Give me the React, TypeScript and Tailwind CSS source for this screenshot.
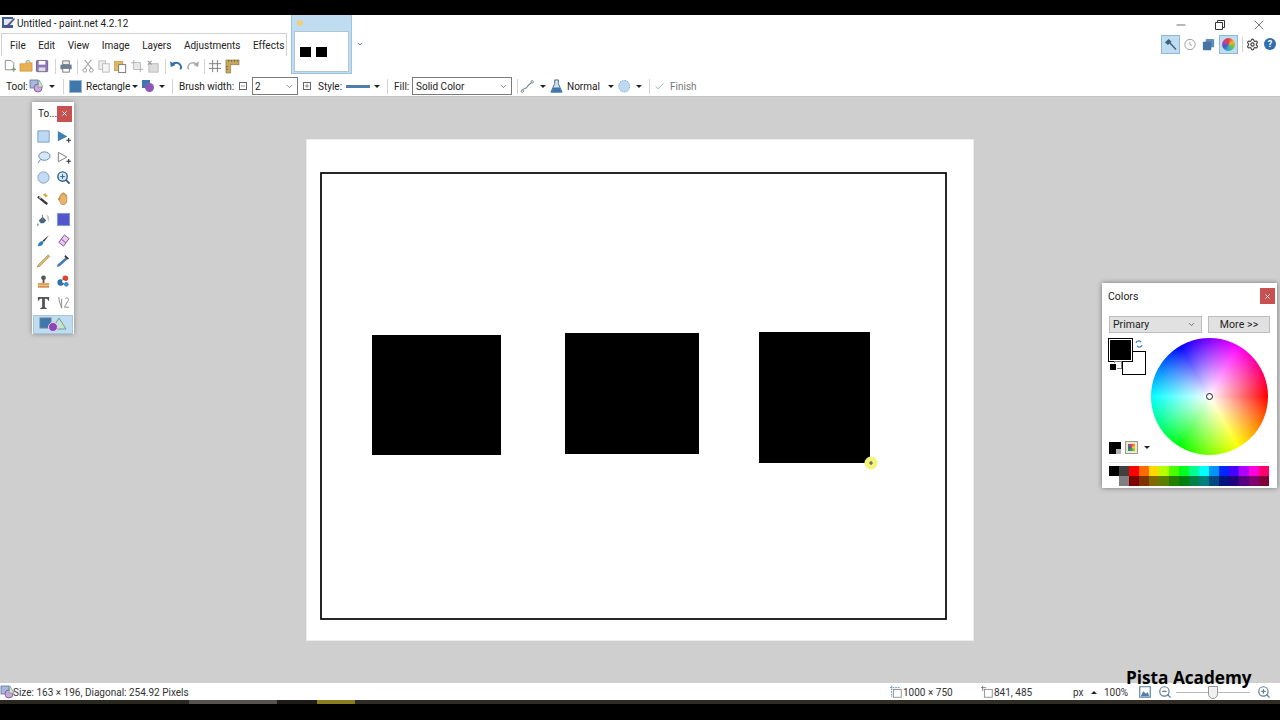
import type { ReactNode } from 'react'
import { Check, ChevronDown, Settings, X, Minus, Plus, ZoomIn, ZoomOut } from 'lucide-react'

const paletteTop = ['#000000', '#404040', '#ff0000', '#ff6a00', '#ffd800', '#b6ff00', '#4cff00', '#00ff21', '#00ff90', '#00ffff', '#0094ff', '#0026ff', '#4800ff', '#b200ff', '#ff00dc', '#ff006e']
const paletteBottom = ['#ffffff', '#808080', '#7f0000', '#7f3300', '#7f6a00', '#5b7f00', '#267f00', '#007f0e', '#007f46', '#007f7f', '#004a7f', '#00137f', '#21007f', '#57007f', '#7f006e', '#7f0037']
const menus = ['File', 'Edit', 'View', 'Image', 'Layers', 'Adjustments', 'Effects']

function Ico({ size = 16, children }: { size?: number; children: ReactNode }) {
  return (
    <svg width={size} height={size} viewBox="0 0 16 16" fill="none" className="shrink-0">
      {children}
    </svg>
  )
}

function Caret({ className = '' }: { className?: string }) {
  return <span className={`block w-0 h-0 border-x-[3px] border-x-transparent border-t-[3px] border-t-[#222] ${className}`} />
}

function Sep({ className = '' }: { className?: string }) {
  return <span className={`block w-px h-[15px] bg-[#d4d4d4] shrink-0 ${className}`} />
}

function ShapesIcon() {
  return (
    <Ico size={16}>
      <rect x="1" y="2" width="8" height="8" fill="#a9b9d9" stroke="#5a6fa8" strokeWidth=".8" />
      <circle cx="9" cy="10" r="4" fill="#c9a6dc" stroke="#7a4fa0" strokeWidth=".8" />
      <path d="M10 2l4 7h-5z" fill="#cfe6d8" stroke="#6b9c86" strokeWidth=".7" />
    </Ico>
  )
}

const toolIcons: ReactNode[] = [
  <rect key="a" x="2" y="2" width="12" height="12" fill="#bcd9f4" stroke="#7f9db9" />,
  <g key="b"><path d="M2 2l10 6-10 5z" fill="#3f7fb5" /><path d="M11 12h5M13.5 9.5v5" stroke="#333" strokeWidth="1.2" /></g>,
  <g key="c"><ellipse cx="9" cy="6.5" rx="6" ry="4.5" fill="#d5e6f5" stroke="#5f87ad" /><path d="M5 10l-3 4" stroke="#5f87ad" /></g>,
  <g key="d"><path d="M2.500 2.500l9 5-9 5z" fill="#fff" stroke="#777" /><path d="M11 12h5M13.500 9.500v5" stroke="#333" strokeWidth="1.200" /></g>,
  <circle key="e" cx="8" cy="8" r="6" fill="#c3dcf3" stroke="#7f9db9" />,
  <g key="f"><circle cx="7" cy="7" r="5" fill="#d8e8f5" stroke="#2f5f86" strokeWidth="1.500" /><path d="M7 4.500v5M4.500 7h5" stroke="#2f5f86" /><path d="M10.500 10.500l4 4" stroke="#2f5f86" strokeWidth="2" /></g>,
  <g key="g"><path d="M2 6l10 8" stroke="#333" strokeWidth="2.500" /><path d="M5 8l-1-2" stroke="#ccc" strokeWidth="2" /><path d="M10 2l1 2 2 1-2 1-1 1-1-2-2-1 2-1z" fill="#d8a63a" /></g>,
  <path key="h" d="M4 9V5.500c0-1 1.500-1 1.500 0V3.500c0-1 1.500-1 1.500 0v-1c0-1 1.500-1 1.500 0v1c0-1 1.500-1 1.500 0V5c0-1 1.500-1 1.500 0v5c0 3-1.500 4.500-4 4.500S5 13 4 11L2.500 8.500C2 7.500 3.500 7 4 8z" fill="#e8b56a" stroke="#a9782f" strokeWidth=".7" />,
  <g key="i"><path d="M3 9l4-4 4 4-3 3H5z" fill="#44647f" /><path d="M7 3v6" stroke="#777" /><path d="M2 12c-1 1-1 3 0 3s1-2 0-3z" fill="#3f7fb5" /><path d="M11 2l3 3v5h-1z" fill="#ccc" /></g>,
  <g key="j"><rect x="1.500" y="1.500" width="13" height="13" fill="#5555d0" stroke="#7f9db9" /></g>,
  <g key="k"><path d="M14 2L7 8l1.500 1.500z" fill="#444" /><path d="M2 14c0-3 2-5 5-5.500L8 10c-.5 3-3 4-6 4z" fill="#2f7fbe" /></g>,
  <g key="l"><path d="M9 2l5 4-6 8-5-4z" fill="#e7c9ec" stroke="#8a4f9c" /><path d="M5.500 6.500l5 4" stroke="#8a4f9c" /></g>,
  <g key="m"><path d="M13 2l1.500 1.500L4 14l-2.500 1 1-2.500z" fill="#e3c36b" stroke="#8a7a3a" strokeWidth=".7" /><path d="M11.500 3.500l1.500 1.500" stroke="#d77" /></g>,
  <g key="n"><path d="M10 5l2 2-8 7-3 1 1-3z" fill="#3f7fb5" /><path d="M10 2l4 4-2 1-3-3z" fill="#333" /></g>,
  <g key="o"><circle cx="8" cy="4" r="2.500" fill="#555" /><rect x="7" y="5" width="2" height="5" fill="#555" /><rect x="2" y="9.500" width="12" height="3" fill="#e3a35a" /><rect x="2" y="13" width="12" height="1.500" fill="#c9772f" /></g>,
  <g key="p"><circle cx="10" cy="4.500" r="3" fill="#d6462f" /><circle cx="5" cy="9" r="3.500" fill="#2f6fae" /><circle cx="11" cy="11" r="2.500" fill="#3f8fce" /><circle cx="8" cy="8" r="1.500" fill="#fff" /></g>,
  <path key="q" d="M2 2h12v4h-1C12.500 4.500 12 4 9.500 4V13l2 1v1h-7v-1l2-1V4C4 4 3.500 4.500 3 6H2z" fill="#555" />,
  <g key="r" stroke="#8a8a8a" fill="none"><path d="M3 2c0 5 2 8 3 12V4" /><path d="M10 4c1-2 4-1 3 2l-4 7h5" /></g>,
]

function ToolsWindow() {
  return (
    <div className="absolute left-[32px] top-[102px] w-[42px] h-[232px] bg-white shadow-[0_0_5px_rgba(0,0,0,0.35)] flex flex-col">
      <div className="h-[20px] mt-[2px] flex items-center pl-[6px] gap-[3px] text-[10px]">
        <span className="w-[16px]">To...</span>
        <span className="w-[15px] h-[16px] bg-[#c75050] flex items-center justify-center">
          <X size={7} color="#fff" strokeWidth={3} />
        </span>
      </div>
      <div className="grid grid-cols-2 justify-items-center items-center pl-px pr-px pt-[3px] auto-rows-[20.75px]">
        {toolIcons.map((icon, i) => (
          <Ico key={i} size={15}>{icon}</Ico>
        ))}
      </div>
      <div className="mx-px mt-[2px] h-[20px] bg-[#bfdcf0] border border-[#a4c6de] flex items-center justify-center">
        <svg width="32" height="16" viewBox="0 0 32 16" fill="none">
          <rect x="3" y="2" width="11" height="10" fill="#3f78ad" stroke="#6c7f93" />
          <path d="M22 2l7 11H15z" fill="#c6e2d3" stroke="#6e9d8a" />
          <circle cx="16" cy="11" r="4.500" fill="#8e46b6" stroke="#e6d6f0" />
        </svg>
      </div>
    </div>
  )
}

function ColorsWindow() {
  return (
    <div className="absolute left-[1102px] top-[283px] w-[175px] h-[205px] bg-white shadow-[0_0_5px_rgba(0,0,0,0.45)] flex flex-col pl-[7px] pr-[2px]">
      <div className="flex items-center justify-between h-[16px] mt-[5px] text-[10.5px] text-[#222]">
        <span className="-ml-px pt-px">Colors</span>
        <span className="w-[15px] h-[16px] bg-[#c75050] flex items-center justify-center">
          <X size={7} color="#fff" strokeWidth={3} />
        </span>
      </div>
      <div className="flex mt-[12px] gap-[6px]">
        <div className="w-[93px] h-[17px] bg-[#e1e1e1] border border-[#bdbdbd] flex items-center justify-between pl-[3px] pr-[5px] text-[10.5px]">
          Primary
          <ChevronDown size={9} color="#555" />
        </div>
        <div className="w-[62px] h-[17px] bg-[#e1e1e1] border border-[#bdbdbd] flex items-center justify-center text-[10.5px] tracking-[0.1px]">More &gt;&gt;</div>
      </div>
      <div className="flex mt-[5px]">
        <div className="w-[42px] h-[116px] flex flex-col justify-between shrink-0">
          <div className="relative w-[37px] h-[37px] mt-[1px]">
            <span className="absolute left-[13px] top-[12px] w-[24px] h-[24px] bg-white border border-black" />
            <span className="absolute left-0 top-0 w-[23px] h-[22px] bg-black border border-white outline outline-1 outline-black" />
            <span className="absolute left-[5px] top-[22px] w-[8px] h-[8px] bg-white border border-[#777]" />
            <span className="absolute left-0 top-[24px] w-[8px] h-[8px] bg-black border border-white" />
            <svg className="absolute left-[25px] top-0" width="10" height="10" viewBox="0 0 10 10" fill="none">
              <path d="M2 4c.5-2 3-3 5-1M8 6c-.5 2-3 3-5 1" stroke="#3f7fb5" strokeWidth="1.200" />
            </svg>
          </div>
          <div className="flex items-center gap-[4px]">
            <span className="relative w-[12px] h-[12px] bg-black block">
              <span className="absolute right-0 bottom-0 w-[5px] h-[5px] bg-white/70" />
            </span>
            <span className="w-[13px] h-[13px] border border-[#999] bg-[#f2e7c9] p-[2px] block">
              <span className="block w-full h-full bg-[conic-gradient(#d44,#fc3,#3a3,#36c,#d44)]" />
            </span>
            <Caret className="ml-[2px]" />
          </div>
        </div>
        <div className="relative w-[117px] h-[117px] rounded-full bg-[conic-gradient(#8000ff,#ff00ff_30deg,#ff0000_90deg,#ffff00_150deg,#00ff00_210deg,#00ffff_270deg,#0000ff_330deg,#8000ff)]">
          <div className="absolute inset-0 rounded-full bg-[radial-gradient(circle,#ffffff_0%,rgba(255,255,255,0)_70%)]" />
          <span className="absolute left-[55px] top-[55px] w-[7px] h-[7px] rounded-full border border-[#222]" />
        </div>
      </div>
      <div className="h-px bg-[#e4e4e4] mt-[7px] mr-[6px]" />
      <div className="mt-[3px]">
        {[paletteTop, paletteBottom].map((row, r) => (
          <div key={r} className="flex h-[10px]">
            {row.map((c, i) => (
              <span key={i} className="block w-[10px] h-[10px]" style={{ backgroundColor: c }} />
            ))}
          </div>
        ))}
      </div>
    </div>
  )
}

function Toolbar() {
  return (
    <div className="h-[19px] pt-px flex items-center pl-[2px] text-[#999]">
      <Ico size={15}><path d="M3.500 1.500h6l3 3v7h-9z" fill="#fff" stroke="#8a8a8a" /><path d="M10 11h5M12.500 8.500v5" stroke="#6da16a" strokeWidth="1.300" /></Ico>
      <span className="ml-[2px]"><Ico size={15}><path d="M1 5h5l1-1h7v9H1z" fill="#e9b052" stroke="#b98a34" strokeWidth=".6" /><path d="M7 3c2-2 4-1 5 0" stroke="#4d9a4d" /></Ico></span>
      <span className="ml-[1px]"><Ico size={15}><rect x="1.500" y="1.500" width="12" height="12" rx="1" fill="#8c79b8" stroke="#6c5c96" /><rect x="4" y="2" width="7" height="4" fill="#fff" /><rect x="4" y="9" width="7" height="4" fill="#ddd" /></Ico></span>
      <Sep className="ml-[5px] h-[13px]" />
      <span className="ml-[3px]"><Ico size={15}><rect x="4" y="2" width="7" height="4" fill="#eee" stroke="#777" /><rect x="1.500" y="6" width="12" height="5" fill="#6a7f95" /><rect x="4" y="10" width="7" height="4" fill="#fff" stroke="#777" /></Ico></span>
      <Sep className="ml-[3px] h-[13px]" />
      <span className="ml-[3px]"><Ico size={15}><path d="M4 1l7 9M11 1L4 10" stroke="#aaa" strokeWidth="1.200" /><circle cx="4" cy="12" r="2" stroke="#999" /><circle cx="11" cy="12" r="2" stroke="#999" /></Ico></span>
      <span className="ml-[1px]"><Ico size={15}><rect x="2" y="2" width="7" height="9" fill="#eee" stroke="#bbb" /><rect x="6" y="5" width="7" height="9" fill="#f5f5f5" stroke="#bbb" /></Ico></span>
      <span className="ml-[1px]"><Ico size={15}><rect x="1.500" y="2.500" width="9" height="10" fill="#e2b466" stroke="#b98a34" strokeWidth=".6" /><rect x="6" y="6" width="7.500" height="8.500" fill="#fff" stroke="#777" /></Ico></span>
      <span className="ml-[2px]"><Ico size={15}><path d="M1 4h10v10M4 1v10h10" stroke="#aaa" /><rect x="5" y="5" width="5" height="5" fill="#e5e5e5" /></Ico></span>
      <span className="ml-[1px]"><Ico size={15}><rect x="3" y="5" width="10" height="9" fill="#ddd" stroke="#bbb" /><path d="M2 2l4 4M6 2L2 6" stroke="#999" strokeWidth="1.200" /></Ico></span>
      <Sep className="ml-[4px] h-[13px]" />
      <span className="ml-[3px]"><Ico size={15}><path d="M3 6c3-3 9-3 10 3l-1 2" stroke="#2f6da8" strokeWidth="2" /><path d="M1 2.500l1 6 5-2z" fill="#2f6da8" /></Ico></span>
      <span className="ml-[1px]"><Ico size={15}><path d="M13 6C10 3 4 3 3 9l1 2" stroke="#aaa" strokeWidth="1.500" /><path d="M15 2.500l-1 6-5-2z" fill="#aaa" /></Ico></span>
      <Sep className="ml-[4px] h-[13px]" />
      <span className="ml-[3px]"><Ico size={15}><path d="M1 5h13M1 10h13M5 1v13M10 1v13" stroke="#777" /></Ico></span>
      <span className="ml-[2px]"><Ico size={15}><path d="M1 1h14v5H6v9H1z" fill="#c4a862" stroke="#7f6a35" strokeWidth=".6" /><path d="M4 1v2M7 1v2M10 1v2M13 1v2M1 8h2M1 11h2" stroke="#5a4a20" strokeWidth=".7" /></Ico></span>
    </div>
  )
}

function ToolOptions() {
  return (
    <div className="h-[21px] pt-px flex items-center text-[10px] text-[#222] bg-white whitespace-nowrap">
      <span className="ml-[6px] w-[23px]">Tool:</span>
      <ShapesIcon />
      <Caret className="ml-[4px]" />
      <Sep className="ml-[8px]" />
      <span className="ml-[5px] w-[13px] h-[13px] bg-[#3f78ad] border border-[#9ab7d1] block" />
      <span className="ml-[4px] w-[46px]">Rectangle</span>
      <Caret />
      <span className="ml-[3px]">
        <svg width="14" height="14" viewBox="0 0 14 14"><rect x="1" y="1" width="8" height="8" fill="#3f78ad" /><circle cx="8.500" cy="8.500" r="4.500" fill="#8e58b8" /></svg>
      </span>
      <Caret className="ml-[4px]" />
      <Sep className="ml-[7px]" />
      <span className="ml-[6px] w-[55px]">Brush width:</span>
      <span className="ml-[5px] w-[8px] h-[8px] border border-[#666] flex items-center justify-center"><Minus size={6} color="#333" strokeWidth={2} /></span>
      <div className="ml-[5px] w-[46px] h-[18px] border border-[#7a7a7a] flex items-center justify-between pl-[2px] pr-[3px]">
        2
        <ChevronDown size={9} color="#666" />
      </div>
      <span className="ml-[5px] w-[8px] h-[8px] border border-[#666] flex items-center justify-center"><Plus size={6} color="#333" strokeWidth={2} /></span>
      <span className="ml-[7px] w-[24px]">Style:</span>
      <span className="ml-[4px] w-[24px] h-[3px] bg-[#4f7fa8] block" />
      <Caret className="ml-[4px]" />
      <Sep className="ml-[7px]" />
      <span className="ml-[6px] w-[14px]">Fill:</span>
      <div className="ml-[4px] w-[100px] h-[18px] border border-[#7a7a7a] flex items-center justify-between pl-[3px] pr-[3px]">
        Solid Color
        <ChevronDown size={9} color="#666" />
      </div>
      <Sep className="ml-[5px]" />
      <span className="ml-[2px]">
        <Ico size={15}><path d="M2 13c2-5 4-1 6-5s3-2 5-5" stroke="#6b7f94" strokeWidth="1.100" /><circle cx="2.500" cy="13" r="1.300" fill="#fff" stroke="#6b7f94" /><circle cx="13" cy="3" r="1.300" fill="#fff" stroke="#6b7f94" /></Ico>
      </span>
      <Caret className="ml-[5px]" />
      <span className="ml-[3px]">
        <Ico size={15}><path d="M6 1h4v4l4 9H2l4-9z" fill="#cfe2ef" stroke="#456a8a" /><path d="M4.500 9h7l2 5H2.500z" fill="#3f78ad" /></Ico>
      </span>
      <span className="ml-[3px] w-[33px]">Normal</span>
      <Caret className="ml-[8px]" />
      <span className="ml-[3px]">
        <Ico size={15}><path d="M8 1.500c2 0 3 1 4 2s2 3 1.500 5-1 4-3.500 5-5 0-6.500-1.500S1.500 8 2 6s2-4.500 6-4.500z" fill="#bcd9f4" stroke="#8ea9c2" strokeDasharray="1.500 1" /></Ico>
      </span>
      <Caret className="ml-[4px]" />
      <Sep className="ml-[7px]" />
      <span className="ml-[4px]"><Check size={11} color="#9aa8b0" strokeWidth={2} /></span>
      <span className="ml-[5px] text-[#777]">Finish</span>
    </div>
  )
}

function StatusBar() {
  return (
    <div className="h-[17px] pt-px bg-white flex items-center text-[10px] text-[#333] shrink-0 whitespace-nowrap">
      <ShapesIcon />
      <span className="-ml-[3px] w-[175px]">Size: 163 × 196, Diagonal: 254.92 Pixels</span>
      <span className="ml-[701px]">
        <Ico size={14}><rect x="5" y="5" width="9" height="9" fill="#fff" stroke="#888" /><path d="M1 3h12M3 1v13" stroke="#4f87b5" strokeDasharray="2 1" /></Ico>
      </span>
      <span className="w-[51px]">1000 × 750</span>
      <span className="ml-[26px]">
        <Ico size={14}><rect x="5" y="5" width="9" height="9" fill="#fff" stroke="#888" /><path d="M1 3h6M3 1v6" stroke="#777" /></Ico>
      </span>
      <span className="w-[37px]">841, 485</span>
      <span className="ml-[42px] w-[10px]">px</span>
      <span className="ml-[8px] block w-0 h-0 border-x-[3px] border-x-transparent border-b-[3px] border-b-[#222]" />
      <span className="ml-[7px] w-[24px]">100%</span>
      <span className="ml-[10px]">
        <Ico size={14}><path d="M2 2h12v12H2z" stroke="#4f7fa8" strokeWidth="1.300" /><path d="M3 13l3-6 3 3 2-2 2 5z" fill="#4f7fa8" /></Ico>
      </span>
      <span className="ml-[6px]"><ZoomOut size={14} color="#5f7f94" /></span>
      <div className="ml-[4px] w-[74px] h-[15px] flex items-center relative">
        <span className="block w-full h-px bg-[#bbb]" />
        <span className="absolute left-[32px] top-[1px] w-[10px] h-[13px] bg-[#f0f0f0] border border-[#999] rounded-b-[5px]" />
      </div>
      <span className="ml-[7px]"><ZoomIn size={14} color="#5f7f94" /></span>
    </div>
  )
}

export default function App() {
  return (
    <div className="relative w-[1280px] h-[720px] overflow-hidden bg-black flex flex-col font-['Roboto',sans-serif] text-[#222]">
      <div className="h-[15px] shrink-0 bg-black" />

      {/* header */}
      <div className="h-[60px] shrink-0 bg-white flex">
        <div className="w-[291px] shrink-0 flex flex-col">
          <div className="h-[18px] pb-[2px] flex items-center text-[10px]">
            <svg width="14" height="14" viewBox="0 0 14 14" className="ml-[2px]">
              <rect x="0" y="1" width="11" height="11" fill="#3f5f94" />
              <rect x="2" y="3" width="9" height="6" fill="#dfe8f2" />
              <path d="M3 11l9-9 1 1-8 9z" fill="#5a4a8a" />
            </svg>
            <span className="ml-px">Untitled - paint.net 4.2.12</span>
          </div>
          <div className="h-[23px] pt-px ml-px mr-[4px] border border-b-0 border-[#d0d0d0] flex items-center text-[10px] pl-[8px] gap-[12.5px]">
            {menus.map((m) => <span key={m}>{m}</span>)}
          </div>
          <Toolbar />
        </div>
        <div className="w-[61px] h-[59px] shrink-0 bg-[#bfdcf0] border border-[#9dc3dd] border-t-0 flex flex-col items-center">
          <div className="h-[16px] w-full pl-[5px] flex items-center">
            <span className="block w-[6px] h-[6px] rounded-full bg-[#f0cf7a]" />
          </div>
          <div className="w-[55px] h-[41px] bg-white border border-[#b0c4d2] flex items-center gap-[5px] pl-[5px]">
            <span className="block w-[11px] h-[10px] bg-black" />
            <span className="block w-[11px] h-[10px] bg-black" />
          </div>
        </div>
        <div className="pl-[4px] pt-[25px]"><ChevronDown size={8} color="#6b8aa3" strokeWidth={3} /></div>
        <div className="ml-auto w-[119px] flex flex-col">
          <div className="h-[19px] flex items-center text-[#333]">
            <span className="ml-[13px]"><Minus size={14} strokeWidth={1.2} /></span>
            <svg className="ml-[27px]" width="10" height="10" viewBox="0 0 10 10" fill="none">
              <path d="M.5 2.500h7v7h-7zM2.500 2.500v-2h7v7h-2" stroke="#333" />
            </svg>
            <span className="ml-[26px]"><X size={16} strokeWidth={1} /></span>
          </div>
          <div className="h-[20px] flex items-center">
            <span className="w-[19px] h-[19px] bg-[#bfdcf0] border border-[#8fb8d6] flex items-center justify-center">
              <svg width="13" height="13" viewBox="0 0 13 13">
                <path d="M5 5l6.500 7 1-1L6 4z" fill="#3b5f7f" />
                <path d="M1 4.500L4.500 1 7.500 3.500 4 7z" fill="#3b5f7f" />
              </svg>
            </span>
            <span className="ml-[2px]">
              <Ico size={15}><circle cx="8.500" cy="8" r="5.500" fill="#fff" stroke="#9a9a9a" /><path d="M8.500 5v3l2 1" stroke="#9a9a9a" /></Ico>
            </span>
            <span className="ml-[4px]">
              <Ico size={15}><rect x="5" y="2" width="9" height="9" rx="1" fill="#5d8dbb" /><rect x="2" y="5" width="9" height="9" rx="1" fill="#4775a3" /></Ico>
            </span>
            <span className="ml-[3px] w-[19px] h-[19px] bg-[#bfdcf0] border border-[#8fb8d6] flex items-center justify-center">
              <span className="block w-[13px] h-[13px] rounded-full bg-[conic-gradient(#e04040,#f0b030,#70c040,#30b0d0,#4060c0,#c040a0,#e04040)]" />
            </span>
            <Sep className="ml-[4px]" />
            <span className="ml-[3px]"><Settings size={13} color="#444" strokeWidth={2.2} /></span>
            <span className="ml-[5px] w-[12px] h-[12px] rounded-full bg-[#2f6fae] text-white text-[9px] font-bold leading-[12px] text-center">?</span>
          </div>
        </div>
      </div>

      <ToolOptions />

      {/* canvas area */}
      <div className="flex-1 bg-[#cfcfcf] border-t border-[#c4c4c4] flex items-center justify-center">
        <div className="w-[668px] h-[502px] bg-white border border-[#ececec]">
          <svg width="666" height="500" viewBox="307 140 666 500">
            <rect x="321" y="173" width="625" height="446" fill="none" stroke="#000" strokeWidth="1.700" />
            <rect x="372" y="335" width="129" height="120" fill="#000" />
            <rect x="565" y="333" width="134" height="121" fill="#000" />
            <rect x="759" y="332" width="111" height="131" fill="#000" />
            <circle cx="871" cy="463" r="6.500" fill="#f4f47a" />
            <path d="M869 463h4M871 461v4" stroke="#555" strokeWidth="1.200" />
          </svg>
        </div>
      </div>

      <StatusBar />

      {/* leftover taskbar strip */}
      <div className="h-[4px] shrink-0 flex">
        <span className="block w-[189px] bg-[#2a2620]" />
        <span className="block w-[88px] bg-[#555350]" />
        <span className="block w-[40px] bg-[#1e1c18]" />
        <span className="block w-[38px] bg-[#8a7d20]" />
        <span className="block flex-1 bg-[#2f2b25]" />
      </div>
      <div className="h-[16px] shrink-0 bg-black" />

      <ToolsWindow />
      <ColorsWindow />
      <span className="absolute left-[1126px] top-[665px] text-[17.2px] leading-[25px] font-bold font-['Open_Sans',sans-serif] text-black whitespace-nowrap">Pista Academy</span>
    </div>
  )
}
